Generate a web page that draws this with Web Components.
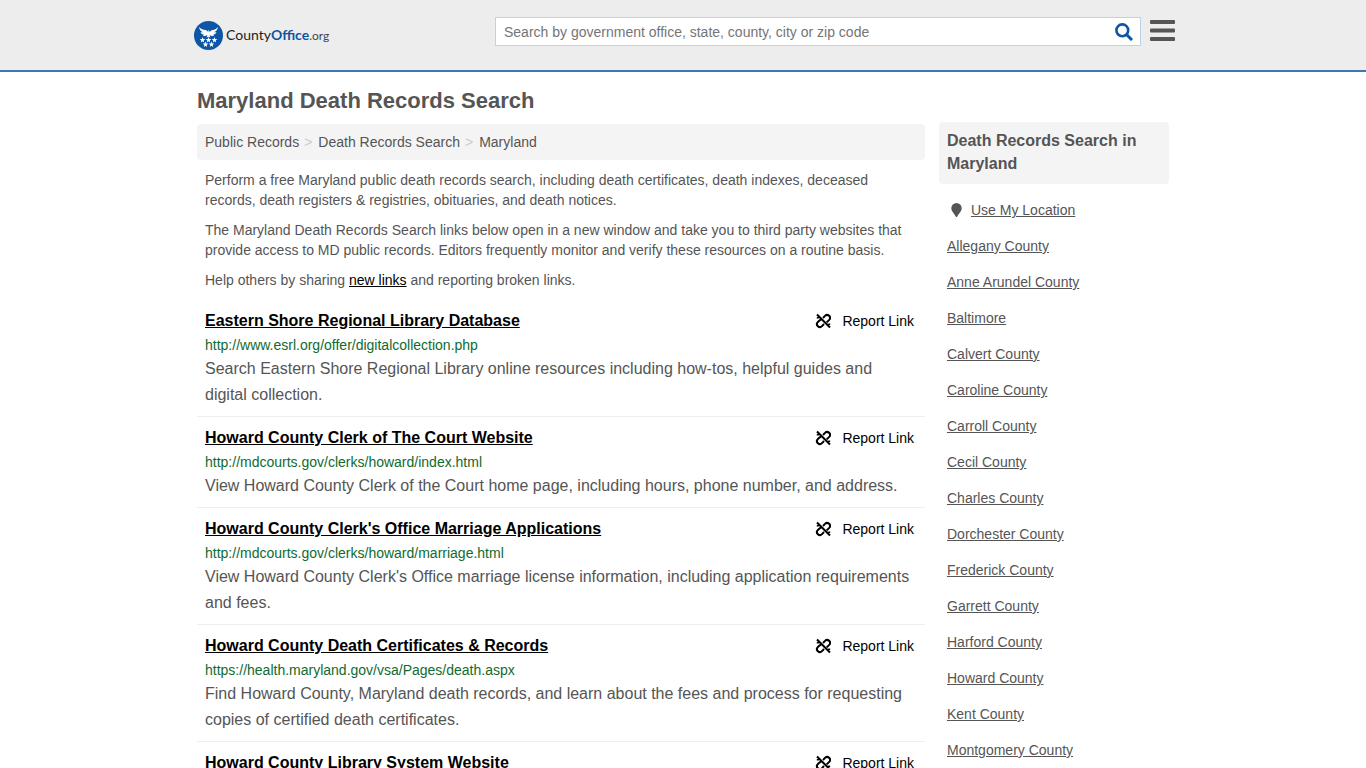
<!DOCTYPE html>
<html lang="en">
<head>
<meta charset="utf-8">
<meta name="viewport" content="width=device-width, initial-scale=1">
<title>Maryland Death Records Search</title>
<style>
  body {
    margin: 0;
    background: #fff;
    color: #555;
    font: 14px/20px "Liberation Sans", Arial, sans-serif;
  }
  .page {
    display: flex;
    gap: 14px;
    max-width: 972px;
    margin: 0 auto;
  }
  main {
    flex: 1;
    min-width: 0;
    padding-top: 16px;
  }
  h1 {
    margin: 0 0 10px;
    font-size: 22px;
    line-height: 26px;
  }
  main p {
    margin: 10px 8px;
  }
  main p a {
    color: #000;
  }
</style>
</head>
<body>
<site-header></site-header>
<div class="page">
  <main>
    <h1>Maryland Death Records Search</h1>
    <bread-crumbs>
      <a href="#records">Public Records</a>
      <a href="#death">Death Records Search</a>
      <a href="#maryland">Maryland</a>
    </bread-crumbs>
    <p>Perform a free Maryland public death records search, including death certificates, death indexes, deceased records, death registers &amp; registries, obituaries, and death notices.</p>
    <p>The Maryland Death Records Search links below open in a new window and take you to third party websites that provide access to MD public records. Editors frequently monitor and verify these resources on a routine basis.</p>
    <p>Help others by sharing <a href="#new">new links</a> and reporting broken links.</p>
    <record-link heading="Eastern Shore Regional Library Database" url="http://www.esrl.org/offer/digitalcollection.php">Search Eastern Shore Regional Library online resources including how-tos, helpful guides and digital collection.</record-link>
    <record-link heading="Howard County Clerk of The Court Website" url="http://mdcourts.gov/clerks/howard/index.html">View Howard County Clerk of the Court home page, including hours, phone number, and address.</record-link>
    <record-link heading="Howard County Clerk's Office Marriage Applications" url="http://mdcourts.gov/clerks/howard/marriage.html">View Howard County Clerk's Office marriage license information, including application requirements and fees.</record-link>
    <record-link heading="Howard County Death Certificates &amp; Records" url="https://health.maryland.gov/vsa/Pages/death.aspx">Find Howard County, Maryland death records, and learn about the fees and process for requesting copies of certified death certificates.</record-link>
    <record-link heading="Howard County Library System Website"></record-link>
  </main>
  <county-list heading="Death Records Search in Maryland"></county-list>
</div>

<script>
class SiteHeader extends HTMLElement {
  constructor() {
    super();
    this.shadowDom = this.attachShadow({ mode: 'open' });
  }

  connectedCallback() {
    this.render();
  }

  render() {
    this.shadowDom.innerHTML = `
    <style>
      :host {
        display: block;
        background: #ededed;
        border-bottom: 2px solid #337ab7;
      }
      .header__bar {
        display: flex;
        align-items: flex-start;
        box-sizing: border-box;
        max-width: 984px;
        min-height: 70px;
        margin: 0 auto;
        padding: 17px 0 0 3px;
      }
      .header__logo {
        display: flex;
        align-items: center;
        gap: 3px;
        margin-top: 3px;
        color: #222;
        font: 14px/29px Lato, sans-serif;
        text-decoration: none;
      }
      .header__logo svg {
        width: 29px;
        height: 29px;
      }
      .header__logo b {
        color: #0d55a5;
      }
      .header__logo small {
        color: #444;
        font-size: 12px;
      }
      .header__search {
        display: flex;
        flex: 0 1 644px;
        margin-left: auto;
        height: 27px;
        background: #fff;
        border: 1px solid #bcd3e6;
      }
      .header__input {
        flex: 1;
        min-width: 0;
        padding: 0 8px;
        border: 0;
        background: transparent;
        color: #555;
        font: 14px "Liberation Sans", Arial, sans-serif;
      }
      .header__input::placeholder {
        color: #757575;
      }
      button {
        display: block;
        padding: 0;
        border: 0;
        background: transparent;
        cursor: pointer;
      }
      .header__submit {
        width: 32px;
      }
      svg {
        display: block;
      }
      .header__submit svg {
        margin: 0 auto;
      }
      .header__menu {
        margin: 3px 0 0 9px;
      }
    </style>
    <header class="header__bar">
      <a class="header__logo" href="#home">
        <svg viewBox="0 0 29 29" aria-hidden="true">
          <defs><path id="star" d="M0-2.900.8-1 2.800-.9 1.200.4 1.700 2.400 0 1.300-1.700 2.400-1.200.4-2.800-.9-.8-1Z" fill="#fff"/></defs>
          <circle cx="14.500" cy="14.500" r="14.500" fill="#0d55a5"/>
          <path d="M5 6c.5 3.200 2.100 4.600 4 5.200-.9.100-1.700 0-2.500-.3.700 1.800 2 2.600 3.700 2.800-.4.500-.9.800-1.500 1 1.700.6 3.500.1 4.700-.8l-.8 2.600 1.900-.8 1.900.8-.8-2.600c1.200.9 3 1.400 4.700.8-.6-.2-1.100-.5-1.500-1 1.700-.2 3-1 3.700-2.800-.8.300-1.600.4-2.500.3 1.900-.6 3.500-2 4-5.200-1.600 2.200-3.700 2.700-5.300 3.100-1.400.4-2.300 1.100-2.900 2.100-.1-1.200-.5-1.800-1.900-1.500l.6.800c-.2.300-.2.500-.1.800-.7-1-1.600-1.800-3-2.200C9.300 8.700 6.700 8.200 5 6Z" fill="#fff"/>
          <use href="#star" x="8.500" y="19"/><use href="#star" x="14.500" y="19"/><use href="#star" x="20.500" y="19"/>
          <use href="#star" x="11.500" y="23.500"/><use href="#star" x="17.500" y="23.500"/>
        </svg>
        <span>County<b>Office</b><small>.org</small></span>
      </a>
      <form class="header__search">
        <input class="header__input" type="text" aria-label="Search" placeholder="Search by government office, state, county, city or zip code">
        <button class="header__submit" type="submit" aria-label="Search">
          <svg width="18" height="18" viewBox="0 0 18 18" fill="none" stroke="#0d55a5">
            <circle cx="7.300" cy="7.300" r="5.900" stroke-width="2.600"/>
            <path d="m11.500 11.500 5.500 5.500" stroke-width="3"/>
          </svg>
        </button>
      </form>
      <button class="header__menu" type="button" aria-label="Menu">
        <svg width="25" height="21" viewBox="0 0 25 21" fill="#555">
          <rect width="25" height="4" rx="1"/>
          <rect y="8.500" width="25" height="4" rx="1"/>
          <rect y="17" width="25" height="4" rx="1"/>
        </svg>
      </button>
    </header>
    `;
  }
}

class BreadCrumbs extends HTMLElement {
  constructor() {
    super();
    this.shadowDom = this.attachShadow({ mode: 'open' });
  }

  connectedCallback() {
    this.shadowDom.innerHTML = `
    <style>
      :host {
        display: block;
        padding: 8px;
        background: #f4f4f4;
        border-radius: 4px;
      }
      nav {
        display: flex;
        flex-wrap: wrap;
      }
      ::slotted(a) {
        color: #555;
        text-decoration: none;
      }
      ::slotted(a:not(:first-child))::before {
        content: ">";
        padding: 0 6px 0 5px;
        color: #ccc;
      }
    </style>
    <nav aria-label="Breadcrumb"><slot></slot></nav>
    `;
  }
}

class RecordLink extends HTMLElement {
  constructor() {
    super();
    this.shadowDom = this.attachShadow({ mode: 'open' });
  }

  connectedCallback() {
    this.render();
  }

  render() {
    const url = this.getAttribute('url');
    this.shadowDom.innerHTML = `
    <style>
      :host {
        display: block;
        padding: 8px;
        border-bottom: 1px solid #eee;
      }
      .record__top {
        display: flex;
        justify-content: space-between;
        line-height: 26px;
      }
      h2 {
        margin: 0;
        font-size: 16px;
      }
      a {
        color: #000;
      }
      .record__report {
        display: flex;
        align-items: center;
        gap: 11px;
        margin-right: 3px;
        text-decoration: none;
      }
      .record__url {
        line-height: 22px;
        color: #0f6b30;
      }
      .record__text {
        font-size: 16px;
        line-height: 26px;
      }
    </style>
    <div class="record__top">
      <h2><a href="${url || '#'}">${this.getAttribute('heading')}</a></h2>
      <a class="record__report" href="#report">
        <svg width="16" height="16" viewBox="0 0 16 16" fill="none" stroke="#000" stroke-width="2" aria-hidden="true">
          <path d="M2 1.500 15 14.500M8 5 10 2.900A2.800 2.800 0 0 1 14.200 6.900L11.700 9.400M9 11 7 13.100A2.800 2.800 0 0 1 2.800 9.100L7 5.500M2.800 5.500 2.800 4M14.200 10.500 14.200 12"/>
        </svg>
        Report Link
      </a>
    </div>
    ${url ? `<div class="record__url">${url}</div>` : ''}
    <div class="record__text"><slot></slot></div>
    `;
  }
}

const counties = [
  'Allegany County', 'Anne Arundel County', 'Baltimore', 'Calvert County',
  'Caroline County', 'Carroll County', 'Cecil County', 'Charles County',
  'Dorchester County', 'Frederick County', 'Garrett County', 'Harford County',
  'Howard County', 'Kent County', 'Montgomery County'
];

class CountyList extends HTMLElement {
  constructor() {
    super();
    this.shadowDom = this.attachShadow({ mode: 'open' });
  }

  connectedCallback() {
    this.shadowDom.innerHTML = `
    <style>
      :host {
        display: block;
        flex: 0 0 230px;
        padding-top: 50px;
      }
      h2 {
        margin: 0 0 8px;
        padding: 7px 8px 9px;
        background: #f4f4f4;
        border-radius: 4px;
        font-size: 16px;
        line-height: 23px;
      }
      ul {
        margin: 0;
        padding: 0;
        list-style: none;
      }
      li {
        display: flex;
        align-items: center;
        padding: 8px;
      }
      a {
        color: #555;
      }
      svg {
        margin: 0 9px 0 4px;
      }
    </style>
    <aside>
      <h2>${this.getAttribute('heading')}</h2>
      <ul>
        <li>
          <svg width="11" height="14" viewBox="0 0 11 14" aria-hidden="true"><path d="M5.500 0A5.200 5.200 0 0 1 10.700 5.200C10.700 8 7.500 11 6.300 13.400Q5.500 14.400 4.700 13.400C3.500 11 .3 8 .3 5.200A5.200 5.200 0 0 1 5.500 0Z" fill="#555"/></svg>
          <a href="#location">Use My Location</a>
        </li>
        ${counties.map(name => `<li><a href="#county">${name}</a></li>`).join('')}
      </ul>
    </aside>
    `;
  }
}

customElements.define('site-header', SiteHeader);
customElements.define('bread-crumbs', BreadCrumbs);
customElements.define('record-link', RecordLink);
customElements.define('county-list', CountyList);
</script>
</body>
</html>
